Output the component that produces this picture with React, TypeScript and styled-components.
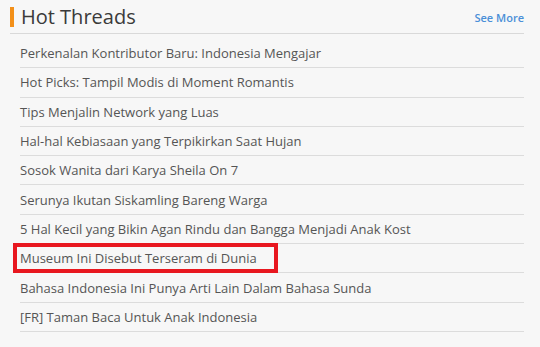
import styled, { createGlobalStyle } from "styled-components";

const GlobalStyle = createGlobalStyle`
    html, body {
        margin: 0;
        padding: 0;
        background: #f7f7f7;
    }
    body {
        font-family: "Open Sans", "Liberation Sans", sans-serif;
    }
`;

const Panel = styled.div`
    width: 540px;
    height: 347px;
    box-sizing: border-box;
    padding: 7px 16px 0 10px;
    background: #f7f7f7;
`;

const Header = styled.div`
    display: flex;
    align-items: center;
    justify-content: space-between;
    height: 26px;
    border-bottom: 1px solid #d9d9d9;
`;

const Title = styled.h2`
    margin: 0;
    height: 20px;
    display: flex;
    align-items: center;
    border-left: 4px solid #f39019;
    padding-left: 7px;
    align-self: flex-start;
    font-size: 20px;
    font-weight: 400;
    color: #3a3a3a;
    line-height: 20px;
`;

const SeeMore = styled.a`
    font-size: 11px;
    font-weight: 600;
    color: #4a8fd8;
    text-decoration: none;
    margin-bottom: 6px;
    cursor: pointer;
`;

const List = styled.ul`
    list-style: none;
    margin: 5px 0 0 10px;
    padding: 0;
`;

const Item = styled.li`
    position: relative;
    height: 28.3px;
    display: flex;
    align-items: center;
    border-bottom: 1px solid #dcdcdc;
    font-size: 13px;
    color: #555555;
`;

const Link = styled.a`
    color: inherit;
    text-decoration: none;
    cursor: pointer;
`;

const Highlight = styled.span`
    position: absolute;
    left: -7px;
    top: -1px;
    width: 265px;
    height: 30px;
    box-sizing: border-box;
    border: 4px solid #e8171f;
    pointer-events: none;
`;

const threads = [
    "Perkenalan Kontributor Baru: Indonesia Mengajar",
    "Hot Picks: Tampil Modis di Moment Romantis",
    "Tips Menjalin Network yang Luas",
    "Hal-hal Kebiasaan yang Terpikirkan Saat Hujan",
    "Sosok Wanita dari Karya Sheila On 7",
    "Serunya Ikutan Siskamling Bareng Warga",
    "5 Hal Kecil yang Bikin Agan Rindu dan Bangga Menjadi Anak Kost",
    "Museum Ini Disebut Terseram di Dunia",
    "Bahasa Indonesia Ini Punya Arti Lain Dalam Bahasa Sunda",
    "[FR] Taman Baca Untuk Anak Indonesia",
];

const App = () => {
    return (
        <>
            <GlobalStyle />
            <Panel>
                <Header>
                    <Title>Hot Threads</Title>
                    <SeeMore>See More</SeeMore>
                </Header>
                <List>
                    {threads.map((t, i) => (
                        <Item key={t}>
                            <Link>{t}</Link>
                            {i === 7 && <Highlight />}
                        </Item>
                    ))}
                </List>
            </Panel>
        </>
    );
};

export default App;
